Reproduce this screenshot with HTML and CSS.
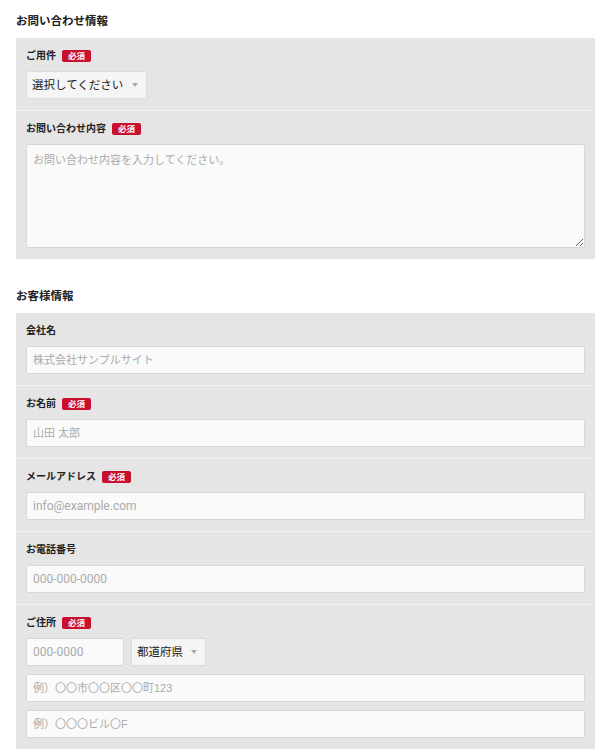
FILE: index.html
```html
<!DOCTYPE html>
<html lang="ja">
<head>
    <meta charset="UTF-8">
    <title>お問い合わせ</title>
    <link rel="stylesheet" href="styles.css">
</head>
<body>
    <form class="contact-form">
        <section class="form-section">
            <h2 class="section-title">お問い合わせ情報</h2>
            <div class="panel">
                <div class="field">
                    <div class="field-label">ご用件 <span class="req">必須</span></div>
                    <div class="select-wrap">
                        <select class="select">
                            <option>選択してください</option>
                        </select>
                    </div>
                </div>
                <div class="field">
                    <div class="field-label">お問い合わせ内容 <span class="req">必須</span></div>
                    <textarea class="textarea" placeholder="お問い合わせ内容を入力してください。"></textarea>
                </div>
            </div>
        </section>

        <section class="form-section">
            <h2 class="section-title">お客様情報</h2>
            <div class="panel">
                <div class="field">
                    <div class="field-label">会社名</div>
                    <input class="input" type="text" placeholder="株式会社サンプルサイト">
                </div>
                <div class="field">
                    <div class="field-label">お名前 <span class="req">必須</span></div>
                    <input class="input" type="text" placeholder="山田 太郎">
                </div>
                <div class="field">
                    <div class="field-label">メールアドレス <span class="req">必須</span></div>
                    <input class="input latin" type="email" placeholder="info@example.com">
                </div>
                <div class="field">
                    <div class="field-label">お電話番号</div>
                    <input class="input latin" type="tel" placeholder="000-000-0000">
                </div>
                <div class="field">
                    <div class="field-label">ご住所 <span class="req">必須</span></div>
                    <div class="address">
                        <div class="zip-row">
                            <input class="input latin zip" type="text" placeholder="000-0000">
                            <div class="select-wrap">
                                <select class="select">
                                    <option>都道府県</option>
                                </select>
                            </div>
                        </div>
                        <input class="input" type="text" placeholder="例）〇〇市〇〇区〇〇町123">
                        <input class="input" type="text" placeholder="例）〇〇〇ビル〇F">
                    </div>
                </div>
            </div>
        </section>
    </form>
</body>
</html>
```

FILE: styles.css
```css
* {
    margin: 0;
    padding: 0;
    box-sizing: border-box;
}

body {
    background: #fff;
    color: #222;
    font-family: "Liberation Sans", "Noto Sans CJK JP", sans-serif;
}

.contact-form {
    width: 579px;
    margin-left: 16px;
    padding-top: 13px;
}

.form-section + .form-section {
    margin-top: 29px;
}

.section-title {
    font-size: 11.5px;
    line-height: 16px;
    font-weight: bold;
    margin-bottom: 9px;
}

.panel {
    background: #e5e5e5;
}

.field {
    padding: 10px 10px 11px;
}

.field + .field {
    border-top: 1px solid #f0f0f0;
}

.field-label {
    display: flex;
    align-items: center;
    gap: 6px;
    font-size: 10px;
    line-height: 16px;
    font-weight: bold;
    margin-bottom: 7px;
}

.req {
    display: inline-block;
    background: #c8102e;
    color: #fff;
    font-size: 8.5px;
    line-height: 12px;
    padding: 0 6px;
    border-radius: 2px;
}

.input,
.textarea,
.select {
    font-family: inherit;
    font-size: 11px;
    color: #222;
    background: #fafafa;
    border: 1px solid #d8d8d8;
    border-radius: 2px;
    outline: none;
}

.input {
    display: block;
    width: 100%;
    height: 28px;
    padding: 0 6px;
}

.input.latin {
    font-family: Roboto, "Liberation Sans", sans-serif;
    font-size: 12px;
}

.textarea {
    display: block;
    width: 100%;
    height: 104px;
    padding: 6px;
    resize: vertical;
}

.input::placeholder,
.textarea::placeholder {
    color: #aaa;
}

.select-wrap {
    position: relative;
    display: inline-block;
}

.select-wrap::after {
    content: "";
    position: absolute;
    right: 9px;
    top: 12px;
    border-left: 3px solid transparent;
    border-right: 3px solid transparent;
    border-top: 4px solid #aaa;
    pointer-events: none;
}

.select {
    appearance: none;
    -webkit-appearance: none;
    height: 28px;
    padding: 0 22px 0 5px;
    background: #f5f5f5;
    border-color: #dcdcdc;
    font-size: 11.5px;
}

.address {
    display: flex;
    flex-direction: column;
    gap: 8px;
}

.zip-row {
    display: flex;
    gap: 7px;
}

.input.zip {
    width: 98px;
}
```
